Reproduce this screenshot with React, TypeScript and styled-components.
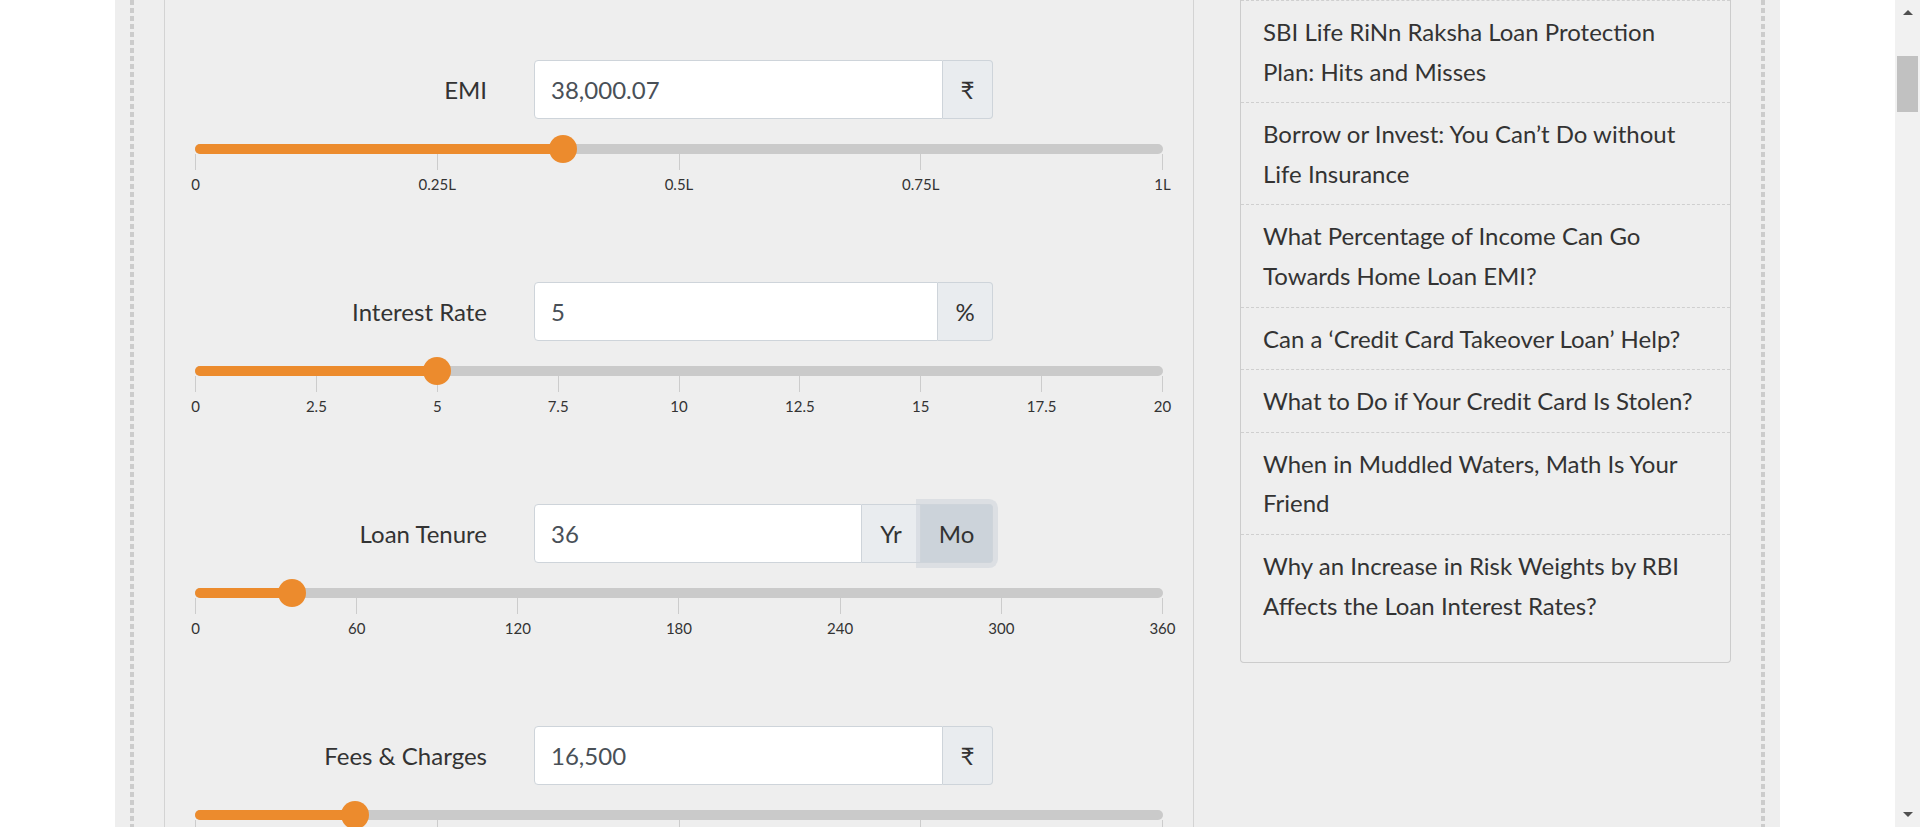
import styled, { createGlobalStyle, css } from "styled-components";

const GlobalStyle = createGlobalStyle`
  html, body {
    margin: 0;
    padding: 0;
    overflow: hidden;
    background: #ffffff;
    font-family: Lato, "DejaVu Sans", sans-serif;
    color: #333333;
  }

  * {
    box-sizing: border-box;
  }
`;

interface Addon {
  text: string;
  width: number;
  active?: boolean;
}

interface Row {
  label: string;
  value: string;
  pct: number;
  ticks: string[];
  addons: Addon[];
}

const lakhTicks = ["0", "0.25L", "0.5L", "0.75L", "1L"];

const rows: Row[] = [
  { label: "EMI", value: "38,000.07", pct: 38, ticks: lakhTicks, addons: [{ text: "₹", width: 50 }] },
  {
    label: "Interest Rate",
    value: "5",
    pct: 25,
    ticks: ["0", "2.5", "5", "7.5", "10", "12.5", "15", "17.5", "20"],
    addons: [{ text: "%", width: 55 }],
  },
  {
    label: "Loan Tenure",
    value: "36",
    pct: 10,
    ticks: ["0", "60", "120", "180", "240", "300", "360"],
    addons: [
      { text: "Yr", width: 59 },
      { text: "Mo", width: 72, active: true },
    ],
  },
  { label: "Fees & Charges", value: "16,500", pct: 16.5, ticks: lakhTicks, addons: [{ text: "₹", width: 50 }] },
];

const articles = [
  "SBI Life RiNn Raksha Loan Protection Plan: Hits and Misses",
  "Borrow or Invest: You Can\u2019t Do without Life Insurance",
  "What Percentage of Income Can Go Towards Home Loan EMI?",
  "Can a \u2018Credit Card Takeover Loan\u2019 Help?",
  "What to Do if Your Credit Card Is Stolen?",
  "When in Muddled Waters, Math Is Your Friend",
  "Why an Increase in Risk Weights by RBI Affects the Loan Interest Rates?",
];

function App() {
  return (
    <>
      <GlobalStyle />
      <Shell>
        <Main>
          <Page>
            <Frame>
              <Columns>
                <CalcPanel>
                  {rows.map((row) => (
                    <SliderRow key={row.label}>
                      <FieldRow>
                        <FieldLabel>{row.label}</FieldLabel>
                        <InputGroup>
                          <ValueInput readOnly value={row.value} />
                          {row.addons.map((a, i) => (
                            <AddonBox
                              key={a.text}
                              $width={a.width}
                              $active={a.active}
                              $last={i === row.addons.length - 1}
                            >
                              {a.text}
                            </AddonBox>
                          ))}
                        </InputGroup>
                      </FieldRow>
                      <Track>
                        <Fill style={{ width: `${row.pct}%` }} />
                        <Thumb style={{ left: `${row.pct}%` }} />
                      </Track>
                      <Scale>
                        {row.ticks.map((t) => (
                          <Tick key={t}>
                            <TickLine />
                            <TickLabel>{t}</TickLabel>
                          </Tick>
                        ))}
                      </Scale>
                    </SliderRow>
                  ))}
                </CalcPanel>

                <SideCard>
                  {articles.map((a) => (
                    <ArticleItem key={a}>{a}</ArticleItem>
                  ))}
                </SideCard>
              </Columns>
            </Frame>
          </Page>
        </Main>

        <ScrollRail>
          <ArrowUp />
          <RailThumb />
          <RailSpace />
          <ArrowDown />
        </ScrollRail>
      </Shell>
    </>
  );
}

export default App;

const Shell = styled.div`
  display: flex;
  height: 100vh;
  overflow: hidden;
`;

const Main = styled.div`
  flex: 1;
  min-width: 0;
  overflow: hidden;
`;

const Page = styled.div`
  width: 1665px;
  min-height: 100vh;
  margin: 0 auto;
  padding: 0 15px;
  background: #eeeeee;
  display: flex;
  flex-direction: column;
`;

const Frame = styled.div`
  flex: 1;
  padding: 0 34px;
  background-image: repeating-linear-gradient(to bottom, #cccccc 0 5px, transparent 5px 8px),
    repeating-linear-gradient(to bottom, #cccccc 0 5px, transparent 5px 8px);
  background-size: 4px 100%;
  background-position: left top, right top;
  background-repeat: no-repeat;
`;

const Columns = styled.div`
  display: flex;
  align-items: flex-start;
  gap: 46px;
`;

const CalcPanel = styled.div`
  width: 1030px;
  padding: 60px 30px 40px;
  border-left: 1px solid #d3d3d3;
  border-right: 1px solid #d3d3d3;
  border-bottom: 1px solid #d3d3d3;
`;

const SliderRow = styled.div`
  margin-bottom: 91px;
`;

const FieldRow = styled.div`
  display: flex;
  align-items: center;
  height: 59px;
`;

const FieldLabel = styled.label`
  width: 292px;
  margin-right: 47px;
  text-align: right;
  font-size: 24px;
  color: #333333;
`;

const InputGroup = styled.div`
  display: flex;
  width: 459px;
  height: 59px;
`;

const ValueInput = styled.input`
  flex: 1;
  min-width: 0;
  height: 100%;
  padding: 0 16px;
  border: 1px solid #ced4da;
  border-radius: 4px 0 0 4px;
  background: #ffffff;
  font-family: Lato, sans-serif;
  font-size: 24px;
  color: #495057;
  outline: none;
`;

const AddonBox = styled.div<{ $width: number; $active?: boolean; $last?: boolean }>`
  width: ${(p) => p.$width}px;
  height: 100%;
  display: flex;
  align-items: center;
  justify-content: center;
  background: #e9ecef;
  border: 1px solid #ced4da;
  border-left: none;
  font-size: 24px;
  color: #333333;
  ${(p) =>
    p.$last &&
    css`
      border-radius: 0 4px 4px 0;
    `}
  ${(p) =>
    p.$active &&
    css`
      background: #ccd3da;
      box-shadow: 0 0 0 5px rgba(206, 212, 218, 0.55);
    `}
`;

const Track = styled.div`
  position: relative;
  height: 10px;
  margin-top: 25px;
  border-radius: 5px;
  background: #cacaca;
`;

const Fill = styled.div`
  height: 100%;
  border-radius: 5px 0 0 5px;
  background: #ec8b2d;
`;

const Thumb = styled.div`
  position: absolute;
  top: 50%;
  width: 28px;
  height: 28px;
  border-radius: 50%;
  background: #ec8b2d;
  transform: translate(-50%, -50%);
`;

const Scale = styled.div`
  display: flex;
  justify-content: space-between;
`;

const Tick = styled.div`
  width: 1px;
  display: flex;
  flex-direction: column;
  align-items: center;
`;

const TickLine = styled.div`
  width: 1px;
  height: 16px;
  background: #cccccc;
`;

const TickLabel = styled.span`
  margin-top: 7px;
  font-size: 15px;
  line-height: 14px;
  white-space: nowrap;
  color: #333333;
`;

const SideCard = styled.div`
  width: 491px;
  padding-bottom: 26px;
  border: 1px solid #cccccc;
  border-top: none;
  border-radius: 0 0 4px 4px;
`;

const ArticleItem = styled.div`
  padding: 11px 30px 11px 22px;
  border-top: 1px dashed #cfcfcf;
  font-size: 24px;
  line-height: 1.65;
  color: #333333;
`;

const ScrollRail = styled.div`
  width: 25px;
  flex-shrink: 0;
  height: 100vh;
  background: #f1f1f1;
  display: flex;
  flex-direction: column;
  align-items: center;
`;

const ArrowUp = styled.div`
  width: 0;
  height: 0;
  margin-top: 10px;
  border-left: 5px solid transparent;
  border-right: 5px solid transparent;
  border-bottom: 5px solid #505050;
`;

const RailThumb = styled.div`
  width: 21px;
  height: 56px;
  margin-top: 41px;
  background: #c1c1c1;
`;

const RailSpace = styled.div`
  flex: 1;
`;

const ArrowDown = styled.div`
  width: 0;
  height: 0;
  margin-bottom: 10px;
  border-left: 5px solid transparent;
  border-right: 5px solid transparent;
  border-top: 5px solid #505050;
`;
